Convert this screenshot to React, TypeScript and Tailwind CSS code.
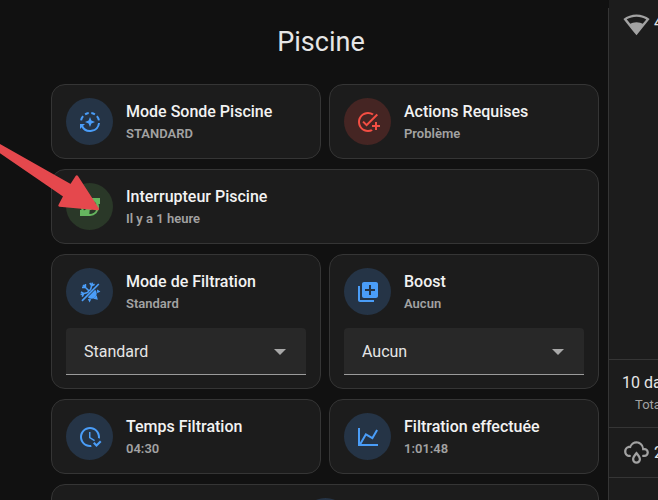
import type { ReactNode } from "react";
import { MdAddTask, MdLibraryAdd } from "react-icons/md";

const PUMP =
  "M2 21V15H3.5C3.18 14.06 3 13.05 3 12A9 9 0 0 1 12 3H22V9H20.5C20.82 9.94 21 10.95 21 12A9 9 0 0 1 12 21H2M5 12C5 13.28 5.34 14.47 5.94 15.5L9.4 13.5C9.15 13.06 9 12.55 9 12C9 11.35 9.21 10.75 9.56 10.26L6.3 7.93C5.5 9.08 5 10.5 5 12M12 19C14.59 19 16.85 17.59 18.06 15.5L14.6 13.5C14.08 14.4 13.11 15 12 15L11.71 15L11.33 18.97L12 19M12 9C13.21 9 14.26 9.72 14.73 10.76L18.37 9.1C17.27 6.68 14.83 5 12 5V9M12 11A1 1 0 0 0 11 12A1 1 0 0 0 12 13A1 1 0 0 0 13 12A1 1 0 0 0 12 11Z";
const CLOCK_CHECK =
  "M23.5 17L18.5 22L15 18.5L16.5 17L18.5 19L22 15.5L23.5 17M13.1 19.9C12.7 20 12.4 20 12 20C7.6 20 4 16.4 4 12S7.6 4 12 4S20 7.6 20 12C20 12.4 20 12.7 19.9 13.1C20.6 13.2 21.2 13.4 21.8 13.7C21.9 13.1 22 12.6 22 12C22 6.5 17.5 2 12 2S2 6.5 2 12C2 17.5 6.5 22 12 22C12.6 22 13.2 21.9 13.7 21.8C13.4 21.3 13.2 20.6 13.1 19.9M12.5 7H11V13L16.2 16.2L17 14.9L12.5 12.2V7Z";
const CHART_LINE =
  "M16,11.78L20.24,4.45L21.97,5.45L16.74,14.5L10.23,10.75L5.46,19H22V21H2V3H4V17.54L9.5,8L16,11.78Z";
const WIFI =
  "M12,3C7.79,3 3.7,4.41 0.38,7C4.41,12.06 7.89,16.37 12,21.5C16.08,16.42 20.24,11.24 23.65,7C20.32,4.41 16.22,3 12,3M12,5C15.07,5 18.09,5.86 20.71,7.45L17.5,11.43C16.26,10.74 14.37,10 12,10C9.62,10 7.74,10.75 6.5,11.43L3.27,7.44C5.91,5.85 8.93,5 12,5Z";
const RAINY =
  "M6,14.03A1,1 0 0,1 7,15.03C7,15.58 6.55,16.03 6,16.03C3.24,16.03 1,13.79 1,11.03C1,8.27 3.24,6.03 6,6.03C7,3.68 9.3,2.03 12,2.03C15.43,2.03 18.24,4.69 18.5,8.06L19,8.03A4,4 0 0,1 23,12.03C23,14.23 21.21,16.03 19,16.03H18C17.45,16.03 17,15.58 17,15.03C17,14.47 17.45,14.03 18,14.03H19A2,2 0 0,0 21,12.03A2,2 0 0,0 19,10.03H17V9.03C17,6.27 14.76,4.03 12,4.03C9.5,4.03 7.45,5.84 7.06,8.21C6.73,8.09 6.37,8.03 6,8.03A3,3 0 0,0 3,11.03A3,3 0 0,0 6,14.03M12,14.15C12.18,14.39 12.37,14.66 12.56,14.94C13,15.56 14,17.03 14,18C14,19.11 13.1,20 12,20A2,2 0 0,1 10,18C10,17.03 11,15.56 11.44,14.94C11.63,14.66 11.82,14.4 12,14.15M12,11.03L11.5,11.59C11.5,11.59 10.65,12.55 9.79,13.81C8.93,15.06 8,16.56 8,18A4,4 0 0,0 12,22A4,4 0 0,0 16,18C16,16.56 15.07,15.06 14.21,13.81C13.35,12.55 12.5,11.59 12.5,11.59";

const tones = {
  blue: "bg-[#253446] text-[#4a9df8]",
  red: "bg-[#452523] text-[#f44e43]",
  green: "bg-[#2a3828] text-[#66b65f]",
};

function Icon({ d, className = "size-6" }: { d: string; className?: string }) {
  return (
    <svg viewBox="0 0 24 24" fill="currentColor" className={className} aria-hidden="true">
      <path d={d} />
    </svg>
  );
}

function AutoModeIcon() {
  return (
    <svg viewBox="0 0 24 24" fill="none" stroke="currentColor" strokeWidth="2" className="size-6" aria-hidden="true">
      <path d="M3.1 10.4A9 9 0 0 1 5.1 6.2M7.1 4.4A9 9 0 0 1 10.7 3.1M13.3 3.1A9 9 0 0 1 16.9 4.4M18.9 6.2A9 9 0 0 1 20.9 10.4" />
      <path d="M21 13A9 9 0 0 1 4 16" />
      <path d="M2 19V14H7L5.2 15.7Z" fill="currentColor" stroke="none" />
      <path d="M12 7L13.4 10.6L17 12L13.4 13.4L12 17L10.6 13.4L7 12L10.6 10.6Z" fill="currentColor" stroke="none" />
    </svg>
  );
}

function SunSnowflakeIcon() {
  return (
    <svg viewBox="0 0 24 24" fill="none" stroke="currentColor" className="size-6" aria-hidden="true">
      <path d="M4 20.8L20.8 4" strokeWidth="1.7" />
      <path
        d="M12.6 9.6L14.4 2.6M13.7 5.7L11.8 3M13.7 5.7L16.6 4.2M10.8 10.8L5 5M7.4 7.4V4M7.4 7.4H4M9.6 12.6L2.6 14.4M5.7 13.7L3 11.8M5.7 13.7L4.2 16.6M12.6 9.6L10.8 10.8L9.6 12.6"
        strokeWidth="1.6"
      />
      <g fill="currentColor" stroke="none">
        <path d="M17.2 9.8A5 5 0 0 1 9.8 17.2Z" />
        <path d="M19 9.6L22.4 11.6L19.2 13.2Z" />
        <path d="M18.8 15.4L19.8 19.8L15.4 18.8Z" />
        <path d="M9.8 19L13.2 19.2L11.6 22.4Z" />
      </g>
    </svg>
  );
}

type Tone = keyof typeof tones;

function Badge({ tone, children }: { tone: Tone; children?: ReactNode }) {
  return (
    <span className={`flex size-[47px] shrink-0 items-center justify-center rounded-full ${tones[tone]}`}>
      {children}
    </span>
  );
}

type CardProps = {
  title: string;
  state: string;
  icon: ReactNode;
  tone?: Tone;
  wide?: boolean;
  select?: string;
};

function Card({ title, state, icon, tone = "blue", wide, select }: CardProps) {
  return (
    <article className={`rounded-[14px] border border-[#353535] bg-[#1c1c1c] px-[14px] py-[13px] ${wide ? "col-span-2" : ""}`}>
      <div className="flex items-center gap-[13px]">
        <Badge tone={tone}>{icon}</Badge>
        <div className="min-w-0 whitespace-nowrap">
          <h2 className="text-base leading-6 font-medium text-[#f2f2f2]">{title}</h2>
          <p className="text-[13px] leading-5 font-semibold text-[#a2a2a2]">{state}</p>
        </div>
      </div>
      {select && (
        <div className="relative mt-[13px]">
          <select
            aria-label={title}
            defaultValue={select}
            className="block h-[47px] w-full appearance-none rounded-t border-b border-[#9b9b9b] bg-[#282828] pt-[2px] pr-10 pl-[18px] text-base text-[#e6e6e6] outline-none"
          >
            <option>{select}</option>
          </select>
          <svg
            viewBox="0 0 12 6"
            className="pointer-events-none absolute top-[21px] right-5 h-[6px] w-3 fill-[#a8a8a8]"
            aria-hidden="true"
          >
            <path d="M0 0H12L6 6Z" />
          </svg>
        </div>
      )}
    </article>
  );
}

function Sidebar() {
  return (
    <aside className="flex w-[50px] shrink-0 flex-col overflow-hidden whitespace-nowrap">
      <div className="ml-px h-2 shrink-0 bg-[#1c1c1c]" />
      <div className="flex flex-1 flex-col border-l border-[#353535] bg-[#1c1c1c] text-[#e6e6e6]">
        <div className="flex h-[351px] shrink-0 items-start gap-1 pt-[3px] pl-[14px]">
          <Icon d={WIFI} className="size-[27px] shrink-0 text-[#a2a2a2]" />
          <span className="text-base leading-6">4</span>
        </div>
        <div className="h-[68px] shrink-0 border-t border-[#353535] pt-[11px] pl-[13px]">
          <p className="text-base leading-6">10 days</p>
          <p className="pl-[13px] text-[13px] leading-5 text-[#a2a2a2]">Total</p>
        </div>
        <div className="flex h-[50px] shrink-0 items-center gap-1 border-t border-[#353535] pl-[14px]">
          <Icon d={RAINY} className="size-[27px] shrink-0 text-[#a2a2a2]" />
          <span className="text-base leading-6">2</span>
        </div>
        <div className="flex-1 border-t border-[#353535]" />
      </div>
    </aside>
  );
}

export default function App() {
  return (
    <div className="relative flex h-screen overflow-hidden bg-[#111111] font-[Roboto,sans-serif]">
      <main className="min-w-0 flex-1 pr-[9px] pl-[51px]">
        <h1 className="pt-[22px] pr-2 pb-[22px] text-center text-[27px] leading-10 text-[#e6e6e6]">Piscine</h1>
        <div className="grid grid-cols-2 gap-x-2 gap-y-[10px]">
          <Card title="Mode Sonde Piscine" state="STANDARD" icon={<AutoModeIcon />} />
          <Card title="Actions Requises" state="Problème" tone="red" icon={<MdAddTask className="size-6" />} />
          <Card title="Interrupteur Piscine" state="Il y a 1 heure" tone="green" wide icon={<Icon d={PUMP} />} />
          <Card title="Mode de Filtration" state="Standard" select="Standard" icon={<SunSnowflakeIcon />} />
          <Card title="Boost" state="Aucun" select="Aucun" icon={<MdLibraryAdd className="size-6" />} />
          <Card title="Temps Filtration" state="04:30" icon={<Icon d={CLOCK_CHECK} />} />
          <Card title="Filtration effectuée" state="1:01:48" icon={<Icon d={CHART_LINE} />} />
          <article className="col-span-2 flex justify-center rounded-[14px] border border-[#353535] bg-[#1c1c1c] p-[13px]">
            <Badge tone="blue" />
          </article>
        </div>
      </main>
      <Sidebar />
      <svg viewBox="0 0 110 80" className="pointer-events-none absolute top-[140px] left-0 h-20 w-[110px]" aria-hidden="true">
        <path
          d="M-4 3L71 45.5L76.8 36.5L97.8 69L59.5 65.5L64.5 56L-4 9Z"
          fill="#e5484d"
          stroke="#e5484d"
          strokeWidth="2.4"
          strokeLinejoin="round"
        />
      </svg>
    </div>
  );
}
